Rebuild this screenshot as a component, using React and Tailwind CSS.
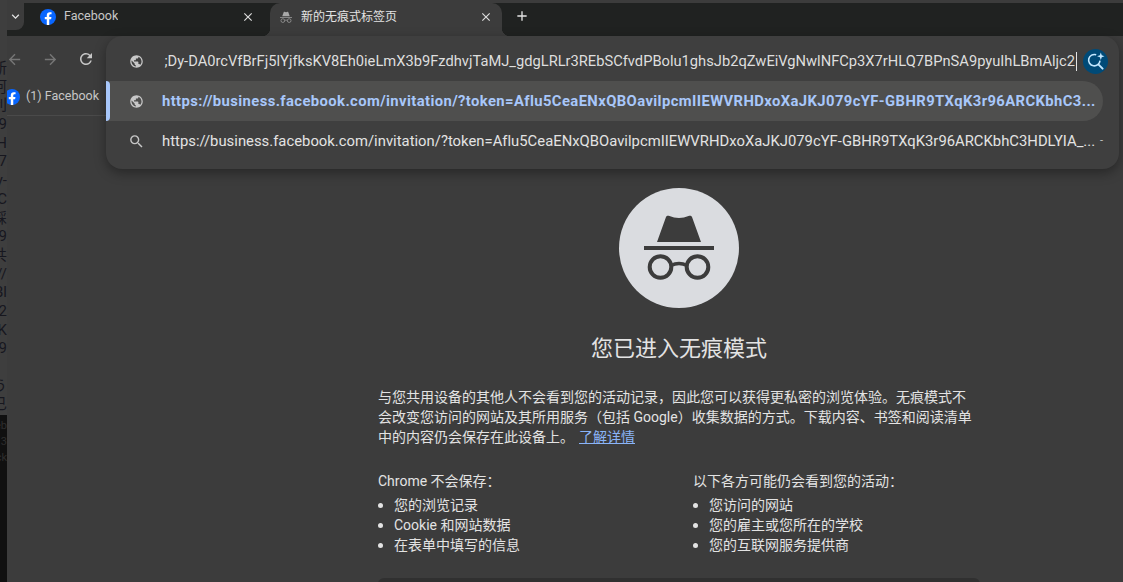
import { MdAdd, MdArrowBack, MdArrowForward, MdClose, MdKeyboardArrowDown, MdPublic, MdRefresh, MdSearch } from 'react-icons/md';

const UI_FONT = { fontFamily: 'Roboto, "Noto Sans CJK SC", sans-serif' };

const STRIP_LINES = ['新', '阿', '利', '9', 'H', 'J7', 'y-', 'FC', '踩', '9', '共', '//', 'Bl', 'j2', 'K', '9', '', 'う', '已'];

const URL_HEAD = 'https://business.facebook.com/invitation/?token=Aflu5CeaENxQBOavilpcmIIEWVRHDxoXaJKJ079cYF-GBHR9TXqK3r96ARCKbhC3';
const TYPED = ';Dy-DA0rcVfBrFj5lYjfksKV8Eh0ieLmX3b9FzdhvjTaMJ_gdgLRLr3REbSCfvdPBolu1ghsJb2qZwEiVgNwlNFCp3X7rHLQ7BPnSA9pyuIhLBmAljc2';

function FacebookIcon({ className }) {
  return (
    <svg viewBox="0 0 16 16" className={className}>
      <circle cx="8" cy="8" r="8" fill="#0866ff" />
      <path
        fill="#fff"
        d="M11.1 10.3l.35-2.3H9.25V6.5c0-.63.31-1.25 1.3-1.25h1V3.3S10.65 3.15 9.78 3.15c-1.81 0-3 1.1-3 3.1V8h-2v2.3h2v5.6a8 8 0 0 0 2.47 0v-5.6z"
      />
    </svg>
  );
}

function IncognitoGlyph({ color, className }) {
  return (
    <svg viewBox="25 24 70 68" className={className}>
      <path fill={color} d="M38 54 47 29c.6-1.500 2-1.600 3.500-1 3 1 6 2 9.500 2s6.500-1 9.500-2c1.500-.6 2.900-.5 3.500 1l9 25z" />
      <rect x="25" y="58" width="70" height="4" fill={color} />
      <circle cx="41.500" cy="79" r="10.800" fill="none" stroke={color} strokeWidth="4" />
      <circle cx="78.500" cy="79" r="10.800" fill="none" stroke={color} strokeWidth="4" />
      <path d="M52 77.500c5-2.500 11-2.500 16 0" fill="none" stroke={color} strokeWidth="3.500" />
    </svg>
  );
}

function AiSearchIcon() {
  return (
    <svg viewBox="0 0 24 24" className="h-[24px] w-[24px]" fill="none" stroke="#c2e7ff">
      <path strokeWidth="1.600" d="M12.200 5.800a5.700 5.700 0 1 0 3.800 5.800" />
      <path strokeWidth="2" strokeLinecap="round" d="M14.600 15.600l4 4" />
      <path fill="#c2e7ff" stroke="none" d="M16.800 3.500l.95 2.750 2.750.95-2.750.95-.95 2.750-.95-2.750-2.750-.95 2.750-.95z" />
    </svg>
  );
}

function Tab({ active, icon, title }) {
  return (
    <div
      className={`relative flex h-[33px] w-[232px] shrink-0 items-center rounded-t-[10px] pb-[6px] ${
        active ? 'bg-[#3c3c3c] text-[#e3e3e3]' : 'text-[#c7c7c7]'
      }`}
    >
      {active && (
        <>
          <span className="absolute bottom-0 left-[-8px] h-[8px] w-[8px] bg-[radial-gradient(circle_at_0_0,#202221_8px,#3c3c3c_8.500px)]" />
          <span className="absolute bottom-0 right-[-8px] h-[8px] w-[8px] bg-[radial-gradient(circle_at_100%_0,#202221_8px,#3c3c3c_8.500px)]" />
        </>
      )}
      <div className={`flex items-center ${active ? 'pl-[10px]' : 'pl-[8px]'}`}>{icon}</div>
      <span className={`truncate ${active ? 'ml-[9px] text-[12px]' : 'ml-[8px] text-[12.500px]'}`}>{title}</span>
      <MdClose className="ml-auto mr-[9px] text-[#dcdcdc]" size={14} />
    </div>
  );
}

function OmniboxRow({ icon, selected, children }) {
  return (
    <div
      className={`relative flex h-[40px] items-center ${
        selected ? 'mr-[16px] rounded-r-[20px] bg-[#4f4f4e]' : ''
      }`}
    >
      {selected && <span className="absolute left-0 top-0 h-full w-[4px] rounded-r-[4px] bg-[#a8c7fa]" />}
      <div className="flex w-[56px] shrink-0 justify-center pl-[4px] text-[#c7c7c7]">{icon}</div>
      {children}
    </div>
  );
}

function Omnibox() {
  return (
    <div className="absolute left-[106px] right-[4px] top-[36px] h-[133px] rounded-[16px] bg-[#3f3f3f] pt-[5px] shadow-[0_4px_12px_rgba(0,0,0,0.35)]">
      <OmniboxRow icon={<MdPublic size={15} />}>
        <div className="flex w-[913px] justify-end overflow-hidden">
          <span className="whitespace-nowrap text-[14.700px] text-[#dedede]">{TYPED}</span>
        </div>
        <span className="ml-px h-[19px] w-px bg-[#e3e3e3]" />
        <div className="ml-[6px] flex h-[25px] w-[25px] items-center justify-center rounded-full bg-[#004a77]">
          <AiSearchIcon />
        </div>
      </OmniboxRow>
      <OmniboxRow selected icon={<MdPublic size={15} />}>
        <span className="w-[934px] overflow-hidden whitespace-nowrap text-[14.800px] font-bold tracking-[0.4px] text-[#a8c7fa]">
          {URL_HEAD}...
        </span>
      </OmniboxRow>
      <OmniboxRow icon={<MdSearch size={17} />}>
        <span className="w-[934px] overflow-hidden whitespace-nowrap text-[14.800px] tracking-[0.02px] text-[#e3e3e3]">
          {URL_HEAD}HDLYIA_...
        </span>
        <span className="ml-[4px] text-[11px] text-[#c7c7c7]">-</span>
      </OmniboxRow>
    </div>
  );
}

function WindowEdge() {
  return (
    <div className="flex h-full w-[7px] shrink-0 flex-col bg-[#3e3e3e]">
      <div className="flex h-[415px] flex-col items-end overflow-hidden pt-[59px] text-[15px] leading-[18.700px] text-[#17171f]">
        {STRIP_LINES.map((line, i) => (
          <div key={i} className="h-[18.700px] whitespace-nowrap">{line}</div>
        ))}
      </div>
      <div className="flex flex-1 flex-col items-end overflow-hidden bg-[#101010] pt-[3px] text-[11px] leading-[16px] text-[#2e2e2e]">
        <div className="whitespace-nowrap">eb</div>
        <div className="whitespace-nowrap">3</div>
        <div className="whitespace-nowrap">ck</div>
      </div>
    </div>
  );
}

function BulletList({ items }) {
  return (
    <ul className="mt-[4px]">
      {items.map((item) => (
        <li key={item} className="flex h-[20px] items-center">
          <span className="h-[5px] w-[5px] rounded-full bg-[#e3e3e3]" />
          <span className="ml-[11px]">{item}</span>
        </li>
      ))}
    </ul>
  );
}

export default function App() {
  return (
    <div className="relative flex h-[582px] w-[1123px] overflow-hidden bg-[#3c3c3c]" style={UI_FONT}>
      <WindowEdge />

      <div className="flex min-w-0 flex-1 flex-col">
        <div className="h-[3px] shrink-0 bg-[#3c3c3c]" />

        <div className="flex h-[33px] shrink-0 items-start bg-[#202221]">
          <div className="flex h-[27px] w-[17px] items-center justify-center rounded-br-[8px] bg-[#3c3c3c] text-[#e3e3e3]">
            <MdKeyboardArrowDown size={15} />
          </div>
          <div className="ml-[8px]">
            <Tab icon={<FacebookIcon className="h-[16px] w-[16px]" />} title="Facebook" />
          </div>
          <div className="ml-[6px]">
            <Tab active icon={<IncognitoGlyph color="#a9a9a9" className="h-[12px] w-[12px]" />} title="新的无痕式标签页" />
          </div>
          <div className="ml-[12px] flex h-[26px] items-center text-[#e3e3e3]">
            <MdAdd size={16} />
          </div>
        </div>

        <div className="flex h-[42px] shrink-0 items-center pt-[4px] text-[#c7c7c7]">
          <MdArrowBack size={17} className="ml-[-1px] text-[#767676]" />
          <MdArrowForward size={17} className="ml-[19px] text-[#767676]" />
          <MdRefresh size={18} className="ml-[18px]" />
        </div>

        <div className="flex h-[38px] w-[99px] shrink-0 items-center border-b border-[#4a4a4a]">
          <div className="w-[13px] shrink-0 overflow-hidden">
            <FacebookIcon className="ml-[-3px] h-[16px] w-[16px]" />
          </div>
          <span className="ml-[6px] whitespace-nowrap text-[12.500px] text-[#c7c7c7]">(1) Facebook</span>
        </div>

        <main className="ml-[371px] mt-[72px] w-[602px] flex-1 text-[14px] leading-[20px] text-[#e3e3e3]">
          <div className="flex justify-center">
            <div className="flex h-[120px] w-[120px] items-center justify-center rounded-full bg-[#dadce0]">
              <IncognitoGlyph color="#3c3c3c" className="h-[68px] w-[70px] translate-y-[-2px]" />
            </div>
          </div>
          <h1 className="mt-[26px] text-center text-[22px] font-normal leading-[30px]">您已进入无痕模式</h1>
          <p className="mt-[23px] w-[598px]">
            与您共用设备的其他人不会看到您的活动记录，因此您可以获得更私密的浏览体验。无痕模式不会改变您访问的网站及其所用服务（包括 Google）收集数据的方式。下载内容、书签和阅读清单中的内容仍会保存在此设备上。
            <a className="ml-[5px] text-[#8ab4f8] underline">了解详情</a>
          </p>
          <div className="mt-[24px] flex">
            <div className="w-[315px]">
              <div>Chrome 不会保存：</div>
              <BulletList items={['您的浏览记录', 'Cookie 和网站数据', '在表单中填写的信息']} />
            </div>
            <div>
              <div>以下各方可能仍会看到您的活动：</div>
              <BulletList items={['您访问的网站', '您的雇主或您所在的学校', '您的互联网服务提供商']} />
            </div>
          </div>
          <div className="mt-[23px] h-[20px] rounded-t-[6px] bg-[#303030]" />
        </main>
      </div>

      <Omnibox />
    </div>
  );
}
